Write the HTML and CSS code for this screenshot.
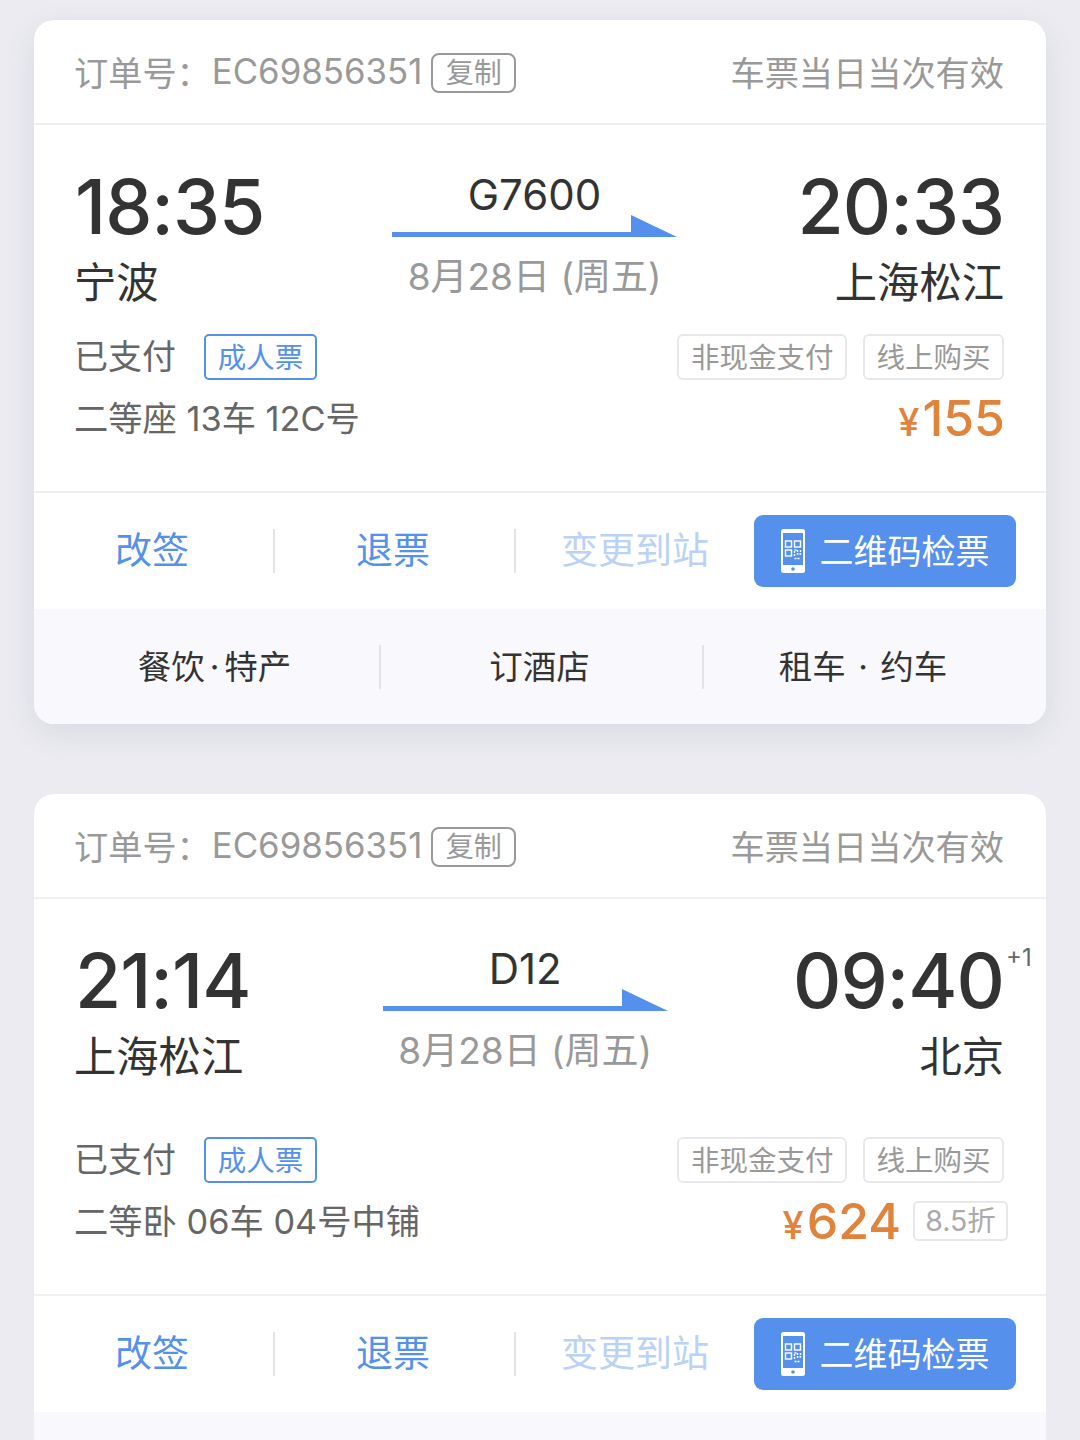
FILE: index.html
```html
<!DOCTYPE html>
<html lang="zh-CN">
<head>
  <meta charset="UTF-8">
  <title>订单列表</title>
  <link rel="stylesheet" href="styles.css">
</head>
<body>

  <svg class="defs" width="0" height="0">
    <symbol id="qrPhone" viewBox="0 0 24 44">
      <rect x="0" y="0" width="24" height="44" rx="2.5" fill="#fff"/>
      <rect x="2" y="4" width="20" height="32" fill="#5591ec"/>
      <circle cx="12" cy="40" r="1.8" fill="#5591ec"/>
      <g fill="none" stroke="#fff" stroke-width="1.4">
        <rect x="4.5" y="12" width="6" height="6"/>
        <rect x="13.5" y="12" width="6" height="6"/>
        <rect x="4.5" y="21" width="6" height="6"/>
        <path d="M13.5 27v-6h3v4h3v-4M13.5 29.5h6" stroke-dasharray="2 1"/>
      </g>
    </symbol>
  </svg>

  <div class="card">
    <div class="card-head">
      <div class="order-no">订单号：<span class="order-code">EC69856351</span><span class="copy-btn">复制</span></div>
      <div class="valid-note">车票当日当次有效</div>
    </div>
    <div class="card-main">
      <div class="trip">
        <div class="stop">
          <div class="time">18:35</div>
          <div class="city">宁波</div>
        </div>
        <div class="route">
          <div class="train-no">G7600</div>
          <svg class="arrow" width="285" height="22" viewBox="0 0 285 22"><path d="M0 17h239V0l46 22H0z" fill="#5591ec"/></svg>
          <div class="trip-date">8月28日 (周五)</div>
        </div>
        <div class="stop stop-end">
          <div class="time">20:33</div>
          <div class="city">上海松江</div>
        </div>
      </div>
      <div class="ticket-row first-row">
        <div class="pay-state"><span class="pay-label">已支付</span><span class="tag-blue">成人票</span></div>
        <div class="tags"><span class="tag-gray">非现金支付</span><span class="tag-gray">线上购买</span></div>
      </div>
      <div class="ticket-row">
        <div class="seat">二等座 13车 12C号</div>
        <div class="price"><span class="yen">¥</span>155</div>
      </div>
    </div>
    <div class="actions">
      <div class="action">改签</div>
      <div class="action">退票</div>
      <div class="action action-off">变更到站</div>
      <div class="qr-btn"><svg class="qr-icon"><use href="#qrPhone"/></svg>二维码检票</div>
    </div>
    <div class="extras">
      <div class="extra">餐饮<span class="dot">·</span>特产</div>
      <div class="extra">订酒店</div>
      <div class="extra">租车 · 约车</div>
    </div>
  </div>

  <div class="card card-cut">
    <div class="card-head">
      <div class="order-no">订单号：<span class="order-code">EC69856351</span><span class="copy-btn">复制</span></div>
      <div class="valid-note">车票当日当次有效</div>
    </div>
    <div class="card-main card-main-tall">
      <div class="trip">
        <div class="stop">
          <div class="time">21:14</div>
          <div class="city">上海松江</div>
        </div>
        <div class="route">
          <div class="train-no">D12</div>
          <svg class="arrow" width="285" height="22" viewBox="0 0 285 22"><path d="M0 17h239V0l46 22H0z" fill="#5591ec"/></svg>
          <div class="trip-date">8月28日 (周五)</div>
        </div>
        <div class="stop stop-end">
          <div class="time">09:40<span class="next-day">+1</span></div>
          <div class="city">北京</div>
        </div>
      </div>
      <div class="ticket-row first-row">
        <div class="pay-state"><span class="pay-label">已支付</span><span class="tag-blue">成人票</span></div>
        <div class="tags"><span class="tag-gray">非现金支付</span><span class="tag-gray">线上购买</span></div>
      </div>
      <div class="ticket-row">
        <div class="seat">二等卧 06车 04号中铺</div>
        <div class="price"><span class="yen">¥</span>624<span class="discount">8.5折</span></div>
      </div>
    </div>
    <div class="actions">
      <div class="action">改签</div>
      <div class="action">退票</div>
      <div class="action action-off">变更到站</div>
      <div class="qr-btn"><svg class="qr-icon"><use href="#qrPhone"/></svg>二维码检票</div>
    </div>
    <div class="extras extras-cut"></div>
  </div>

</body>
</html>
```

FILE: styles.css
```css
* {
  box-sizing: border-box;
}

html,
body {
  height: 1440px;
  overflow: hidden;
}

body {
  margin: 0;
  padding: 20px 34px 0;
  background: #ebebf1;
  font-family: Inter, "Noto Sans CJK SC", sans-serif;
  color: #333;
}

.defs {
  position: absolute;
}

.card {
  width: 1012px;
  margin-bottom: 70px;
  border-radius: 20px;
  background: #fff;
  box-shadow: 0 10px 30px rgba(100, 100, 120, 0.12);
  overflow: hidden;
}

.card-cut {
  margin-bottom: 0;
  border-radius: 20px 20px 0 0;
  box-shadow: none;
}

.card-head {
  height: 105px;
  padding: 0 42px 2px 40px;
  border-bottom: 2px solid #f0f0f2;
  display: flex;
  align-items: center;
  justify-content: space-between;
  font-size: 34.2px;
  color: #999;
}

.order-no {
  display: flex;
  align-items: center;
}

.order-code {
  margin-left: 1px;
  font-size: 34.8px;
}

.copy-btn {
  margin-left: 9px;
  margin-top: 4px;
  width: 85px;
  height: 40px;
  border: 2px solid #999;
  border-radius: 8px;
  font-size: 28px;
  line-height: 36px;
  text-align: center;
}

.card-main {
  height: 368px;
  padding: 40px 42px 0 40px;
  border-bottom: 2px solid #f0f0f2;
}

.card-main-tall {
  height: 397px;
}

.trip {
  display: flex;
  justify-content: space-between;
}

.stop-end {
  text-align: right;
}

.time {
  position: relative;
  padding-left: 1px;
  font-size: 75px;
  font-weight: 500;
  line-height: 84px;
  letter-spacing: -1px;
  color: #333;
}

.next-day {
  position: absolute;
  left: 100%;
  top: 3px;
  margin-left: 2px;
  font-size: 24px;
  font-weight: 400;
  line-height: 32px;
  letter-spacing: 0;
  color: #666;
}

.city {
  margin-top: 7px;
  font-size: 42.3px;
  line-height: 54px;
  color: #333;
}

.route {
  width: 285px;
  margin-top: 5px;
  margin-left: 8px;
  text-align: center;
}

.train-no {
  font-size: 42px;
  line-height: 50px;
}

.arrow {
  display: block;
  margin-top: -5px;
}

.trip-date {
  margin-top: 17px;
  font-size: 37px;
  line-height: 46px;
  color: #999;
  white-space: nowrap;
}

.ticket-row {
  display: flex;
  justify-content: space-between;
  align-items: center;
}

.first-row {
  margin-top: 24px;
  height: 46px;
}

.card-main-tall .first-row {
  margin-top: 53px;
}

.ticket-row + .ticket-row {
  margin-top: 11px;
  height: 50px;
}

.pay-state {
  display: flex;
  align-items: center;
  font-size: 34px;
  color: #666;
}

.pay-label {
  margin-top: -5px;
}

.tag-blue {
  margin-left: 28px;
  width: 113px;
  height: 46px;
  border: 2px solid #5591ec;
  border-radius: 5px;
  font-size: 28.5px;
  line-height: 43px;
  text-align: center;
  color: #5591ec;
}

.tags {
  display: flex;
  gap: 16px;
}

.tag-gray {
  height: 46px;
  padding: 0 11.5px;
  border: 2px solid #e8e8ea;
  border-radius: 6px;
  font-size: 28.5px;
  line-height: 44px;
  color: #999;
}

.seat {
  font-size: 34.3px;
  color: #666;
}

.price {
  display: flex;
  align-items: baseline;
  margin-top: 3px;
  margin-right: -1px;
  font-size: 50px;
  font-weight: 500;
  color: #e0833c;
}

.yen {
  margin-right: 3px;
  font-size: 38px;
}

.discount {
  align-self: center;
  margin-top: 1px;
  margin-left: 12px;
  margin-right: -3px;
  width: 95px;
  height: 40px;
  border: 2px solid #e8e8ea;
  border-radius: 5px;
  font-size: 28.5px;
  font-weight: 400;
  line-height: 36px;
  text-align: center;
  color: #aaa;
}

.actions {
  height: 116px;
  display: flex;
  align-items: center;
}

.action {
  width: 241px;
  height: 44px;
  padding-right: 3px;
  border-right: 2px solid #e4e4e8;
  font-size: 37px;
  line-height: 44px;
  text-align: center;
  color: #5591ec;
}

.action-off {
  border-right: 0;
  color: #b9d2f6;
}

.qr-btn {
  margin-left: -3px;
  width: 262px;
  height: 72px;
  padding-bottom: 4px;
  border-radius: 9px;
  background: #5591ec;
  display: flex;
  align-items: center;
  justify-content: center;
  gap: 15px;
  font-size: 34px;
  color: #fff;
}

.qr-icon {
  width: 24px;
  height: 44px;
  margin-top: 4px;
}

.extras {
  height: 115px;
  background: #f9f9fd;
  display: flex;
  align-items: center;
}

.extras-cut {
  height: 28px;
}

.extra {
  height: 44px;
  border-right: 2px solid #e4e4e8;
  font-size: 33.5px;
  line-height: 44px;
  word-spacing: 3px;
  text-align: center;
  color: #333;
}

.extra:first-child {
  width: 347px;
  padding-left: 16px;
}

.extra:nth-child(2) {
  width: 323px;
  padding-right: 4px;
}

.extra:last-child {
  width: 320px;
  padding-right: 2px;
  border-right: 0;
}

.dot {
  margin: 0 5px;
}
```
